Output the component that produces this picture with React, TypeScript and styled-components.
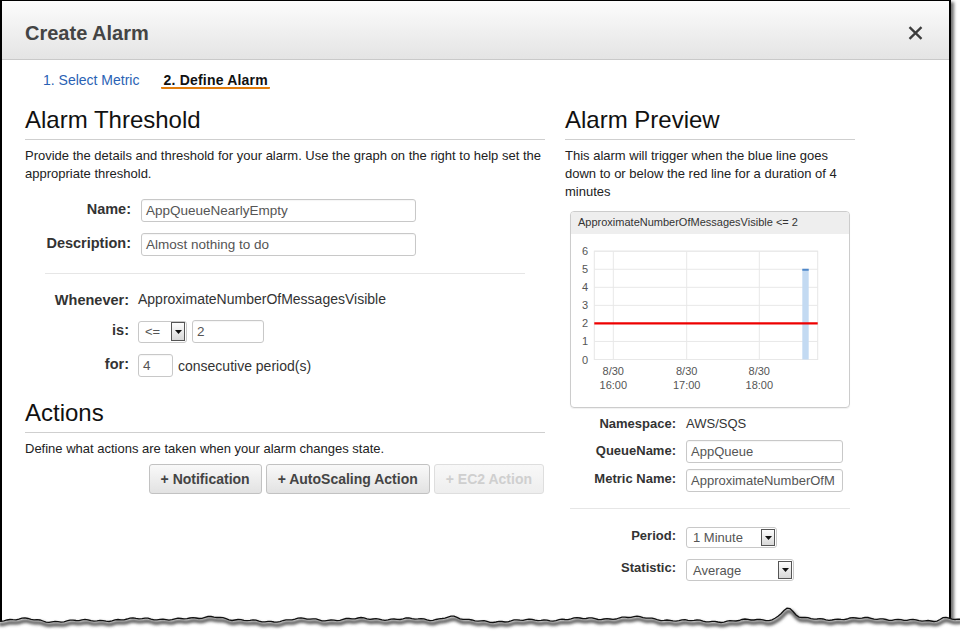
import React from "react";
import styled, { createGlobalStyle } from "styled-components";

const GlobalStyle = createGlobalStyle`
  html, body {
    margin: 0;
    padding: 0;
    background: #fff;
  }
  body {
    font-family: "Liberation Sans", Arial, sans-serif;
    color: #222;
    overflow: hidden;
  }
`;

const Page = styled.div`
  position: relative;
  width: 960px;
  height: 636px;
  overflow: hidden;
`;

const Frame = styled.div`
  width: 951px;
  height: 640px;
  box-sizing: border-box;
  border: 1px solid #000;
  border-left-width: 2px;
  border-right-width: 2px;
  border-bottom: none;
  box-shadow: 3px 2px 3px rgba(0, 0, 0, 0.55);
  background: #fff;
`;

const Header = styled.div`
  height: 59px;
  display: flex;
  align-items: center;
  justify-content: space-between;
  padding: 6px 26px 0 23px;
  box-sizing: border-box;
  background: linear-gradient(#fcfcfc, #e4e4e4);
  border-bottom: 1px solid #c9c9c9;
`;

const Title = styled.h1`
  margin: 0;
  font-size: 20px;
  line-height: 24px;
  font-weight: bold;
  color: #444;
`;

const Close = styled.svg`
  width: 15px;
  height: 14px;
  margin-top: -1px;
`;

const Tabs = styled.div`
  display: flex;
  padding: 13px 0 0 39px;
`;

const Tab = styled.div<{ $active?: boolean }>`
  font-size: 14px;
  line-height: 14px;
  padding: 0 2px;
  margin-left: ${(p) => (p.$active ? "20px" : "0")};
  color: ${(p) => (p.$active ? "#111" : "#2a62b4")};
  font-weight: ${(p) => (p.$active ? "bold" : "normal")};
  letter-spacing: ${(p) => (p.$active ? "0.2px" : "0")};
  border-bottom: 2px solid ${(p) => (p.$active ? "#e27d0c" : "transparent")};
  border-radius: 1px;
`;

const Body = styled.div`
  display: flex;
  gap: 20px;
  padding: 18px 0 0 23px;
`;

const LeftCol = styled.div`
  width: 520px;
  display: flex;
  flex-direction: column;
`;

const RightCol = styled.div`
  width: 290px;
  display: flex;
  flex-direction: column;
`;

const SectionTitle = styled.h2<{ $top?: number }>`
  margin: ${(p) => p.$top ?? 0}px 0 0;
  font-size: 24px;
  line-height: 26px;
  font-weight: normal;
  color: #111;
  padding-bottom: 6px;
  border-bottom: 1px solid #cfcfcf;
`;

const Intro = styled.p`
  margin: 7px 0 0;
  font-size: 13px;
  line-height: 18px;
  color: #222;
`;

const Fields = styled.div<{ $top: number; $gap: number }>`
  display: flex;
  flex-direction: column;
  gap: ${(p) => p.$gap}px;
  margin-top: ${(p) => p.$top}px;
`;

const Row = styled.div<{ $label: number; $gap: number }>`
  display: grid;
  grid-template-columns: ${(p) => p.$label}px auto;
  column-gap: ${(p) => p.$gap}px;
  align-items: start;
  justify-content: start;
`;

const Label = styled.div<{ $size?: number; $pad?: number }>`
  text-align: right;
  font-weight: bold;
  font-size: ${(p) => p.$size ?? 14.5}px;
  line-height: 18px;
  padding-top: ${(p) => p.$pad ?? 1}px;
  color: #333;
  white-space: nowrap;
`;

const Value = styled.div<{ $size?: number }>`
  font-size: ${(p) => p.$size ?? 14}px;
  line-height: 20px;
  color: #333;
`;

const Inline = styled.div`
  display: flex;
  align-items: center;
  gap: 5px;
`;

const TextInput = styled.div<{ $w: number; $h?: number; $size?: number }>`
  width: ${(p) => p.$w}px;
  height: ${(p) => p.$h ?? 23}px;
  box-sizing: border-box;
  border: 1px solid #c8c8c8;
  border-radius: 3px;
  padding: 0 4px;
  font-size: ${(p) => p.$size ?? 13.5}px;
  line-height: ${(p) => (p.$h ?? 23) - 2}px;
  color: #555;
  white-space: nowrap;
  overflow: hidden;
  box-shadow: inset 0 1px 1px rgba(0, 0, 0, 0.04);
`;

const Select = styled.div<{ $w: number; $h: number; $size?: number }>`
  width: ${(p) => p.$w}px;
  height: ${(p) => p.$h}px;
  box-sizing: border-box;
  border: 1px solid #c8c8c8;
  border-radius: 3px;
  display: flex;
  align-items: center;
  justify-content: space-between;
  padding: 0 1px 0 6px;
  font-size: ${(p) => p.$size ?? 13}px;
  color: #555;
`;

const SelectArrow = styled.span<{ $h: number }>`
  width: 14px;
  height: ${(p) => p.$h}px;
  box-sizing: border-box;
  border: 1px solid #555;
  background: linear-gradient(#fdfdfd, #d8d8d8);
  display: flex;
  align-items: center;
  justify-content: center;
`;

const Divider = styled.div<{ $top: number; $inset: number }>`
  height: 1px;
  background: #e6e6e6;
  margin: ${(p) => p.$top}px ${(p) => p.$inset}px 0;
`;

const Buttons = styled.div`
  display: flex;
  justify-content: flex-end;
  gap: 4px;
  margin-top: 6px;
  padding-right: 1px;
`;

const Button = styled.div<{ $disabled?: boolean }>`
  height: 30px;
  box-sizing: border-box;
  padding: 0 11px;
  display: flex;
  align-items: center;
  border: 1px solid ${(p) => (p.$disabled ? "#dedede" : "#c2c2c2")};
  border-radius: 3px;
  background: ${(p) =>
    p.$disabled
      ? "linear-gradient(#f8f8f8, #eeeeee)"
      : "linear-gradient(#f9f9f9, #e2e2e2)"};
  font-size: 14px;
  font-weight: bold;
  color: ${(p) => (p.$disabled ? "#cfcfcf" : "#444")};
`;

const ChartCard = styled.div`
  margin: 10px 0 0 5px;
  width: 280px;
  height: 197px;
  box-sizing: border-box;
  border: 1px solid #cccccc;
  border-radius: 4px;
  overflow: hidden;
  box-shadow: 0 1px 1px rgba(0, 0, 0, 0.06);
`;

const ChartHead = styled.div`
  height: 22px;
  background: #eeeeee;
  font-size: 11px;
  line-height: 21px;
  padding-left: 7px;
  color: #333;
`;

const TornEdge = styled.svg`
  position: absolute;
  left: 0;
  top: 596px;
`;

function Arrow({ h }: { h: number }) {
  return (
    <SelectArrow $h={h}>
      <svg width="7" height="4" viewBox="0 0 7 4">
        <path d="M0 0h7L3.5 4z" fill="#111" />
      </svg>
    </SelectArrow>
  );
}

function Chart() {
  const left = 23.3;
  const right = 246.7;
  const top = 17.2;
  const step = 18.05;
  const bottom = top + step * 6;
  const ys = [6, 5, 4, 3, 2, 1, 0];
  const xs = [
    { x: 42.3, t: "16:00" },
    { x: 115.7, t: "17:00" },
    { x: 188.3, t: "18:00" },
  ];
  return (
    <svg width="278" height="173" viewBox="0 0 278 173">
      <rect x={left} y={top} width={right - left} height={bottom - top} fill="#fff" stroke="#e6e6e6" />
      {ys.map((v, i) => (
        <g key={v}>
          <line x1={left} x2={right} y1={top + i * step} y2={top + i * step} stroke="#e8e8e8" />
          <text x="14" y={top + i * step + 4} fontSize="11" fill="#555" textAnchor="middle" fontFamily="Liberation Sans, Arial, sans-serif">
            {v}
          </text>
        </g>
      ))}
      {xs.map((c) => (
        <g key={c.t}>
          <line x1={c.x} x2={c.x} y1={top} y2={bottom} stroke="#e8e8e8" />
          <text x={c.x} y="141.2" fontSize="11" fill="#555" textAnchor="middle" fontFamily="Liberation Sans, Arial, sans-serif">
            8/30
          </text>
          <text x={c.x} y="154.5" fontSize="11" fill="#555" textAnchor="middle" fontFamily="Liberation Sans, Arial, sans-serif">
            {c.t}
          </text>
        </g>
      ))}
      <rect x="231.3" y={top + step} width="6.4" height={bottom - top - step} fill="#c3daf2" />
      <rect x="231.3" y={top + step - 0.5} width="6.4" height="2" fill="#4f88c9" />
      <line x1={left} x2={right} y1={top + step * 4} y2={top + step * 4} stroke="#ee0000" strokeWidth="2.4" />
    </svg>
  );
}

function tornLine() {
  const bumps = [
    { c: 28, a: -1.5, w: 10 },
    { c: 215, a: -4, w: 9 },
    { c: 300, a: -1.5, w: 14 },
    { c: 450, a: -4.5, w: 8 },
    { c: 640, a: -2, w: 20 },
    { c: 787, a: -11, w: 6 },
    { c: 880, a: -2, w: 18 },
    { c: 946, a: -4, w: 6 },
  ];
  const pts: string[] = [];
  for (let x = -2; x <= 962; x += 3) {
    let y = 24 + 1.2 * Math.sin(x * 0.029) + 0.9 * Math.sin(x * 0.113 + 2) + 0.6 * Math.sin(x * 0.41 + 1);
    for (const b of bumps) y += b.a * Math.exp(-((x - b.c) ** 2) / (2 * b.w * b.w));
    pts.push(`${x},${y.toFixed(1)}`);
  }
  return pts;
}

export default function App() {
  const pts = tornLine();
  const line = "M" + pts.join(" L");
  const fill = line + " L962,40 L-2,40 Z";

  return (
    <>
      <GlobalStyle />
      <Page>
        <Frame>
          <Header>
            <Title>Create Alarm</Title>
            <Close viewBox="0 0 15 14">
              <path d="M1.5 1.2L13.5 12.8M13.5 1.2L1.5 12.8" stroke="#3d3d3d" strokeWidth="2.3" />
            </Close>
          </Header>
          <Tabs>
            <Tab>1. Select Metric</Tab>
            <Tab $active>2. Define Alarm</Tab>
          </Tabs>
          <Body>
            <LeftCol>
              <SectionTitle>Alarm Threshold</SectionTitle>
              <Intro>
                Provide the details and threshold for your alarm. Use the graph on the right to help set the
                appropriate threshold.
              </Intro>
              <Fields $top={16} $gap={11}>
                <Row $label={106} $gap={10}>
                  <Label>Name:</Label>
                  <TextInput $w={275}>AppQueueNearlyEmpty</TextInput>
                </Row>
                <Row $label={106} $gap={10}>
                  <Label>Description:</Label>
                  <TextInput $w={275}>Almost nothing to do</TextInput>
                </Row>
              </Fields>
              <Divider $top={17} $inset={20} />
              <Fields $top={15} $gap={11}>
                <Row $label={104} $gap={9}>
                  <Label $pad={2}>Whenever:</Label>
                  <Value>ApproximateNumberOfMessagesVisible</Value>
                </Row>
                <Row $label={104} $gap={9}>
                  <Label>is:</Label>
                  <Inline>
                    <Select $w={49} $h={22}>
                      &lt;=
                      <Arrow h={19} />
                    </Select>
                    <TextInput $w={72} $h={23}>2</TextInput>
                  </Inline>
                </Row>
                <Row $label={104} $gap={9}>
                  <Label>for:</Label>
                  <Inline>
                    <TextInput $w={35}>4</TextInput>
                    <Value>consecutive period(s)</Value>
                  </Inline>
                </Row>
              </Fields>
              <SectionTitle $top={23}>Actions</SectionTitle>
              <Intro>Define what actions are taken when your alarm changes state.</Intro>
              <Buttons>
                <Button>+ Notification</Button>
                <Button>+ AutoScaling Action</Button>
                <Button $disabled>+ EC2 Action</Button>
              </Buttons>
            </LeftCol>
            <RightCol>
              <SectionTitle>Alarm Preview</SectionTitle>
              <Intro>
                This alarm will trigger when the blue line goes down to or below the red line for a duration of 4
                minutes
              </Intro>
              <ChartCard>
                <ChartHead>ApproximateNumberOfMessagesVisible &lt;= 2</ChartHead>
                <Chart />
              </ChartCard>
              <Fields $top={6} $gap={6}>
                <Row $label={111} $gap={10}>
                  <Label $size={13} $pad={1}>Namespace:</Label>
                  <Value $size={13}>AWS/SQS</Value>
                </Row>
                <Row $label={111} $gap={10}>
                  <Label $size={13} $pad={2}>QueueName:</Label>
                  <TextInput $w={157} $size={13}>AppQueue</TextInput>
                </Row>
                <Row $label={111} $gap={10}>
                  <Label $size={13} $pad={1}>Metric Name:</Label>
                  <TextInput $w={157} $size={13}>ApproximateNumberOfM</TextInput>
                </Row>
              </Fields>
              <Divider $top={16} $inset={5} />
              <Fields $top={18} $gap={11}>
                <Row $label={111} $gap={10}>
                  <Label $size={13} $pad={0}>Period:</Label>
                  <Select $w={91} $h={21}>
                    1 Minute
                    <Arrow h={17} />
                  </Select>
                </Row>
                <Row $label={111} $gap={10}>
                  <Label $size={13} $pad={0}>Statistic:</Label>
                  <Select $w={108} $h={22}>
                    Average
                    <Arrow h={18} />
                  </Select>
                </Row>
              </Fields>
            </RightCol>
          </Body>
        </Frame>
        <TornEdge width="960" height="40" viewBox="0 0 960 40">
          <defs>
            <filter id="blur" x="-5%" y="-50%" width="110%" height="200%">
              <feGaussianBlur stdDeviation="1.6" />
            </filter>
          </defs>
          <path d={fill} fill="#fff" />
          <path d={line} transform="translate(1,3)" fill="none" stroke="#555" strokeWidth="3.5" filter="url(#blur)" />
          <path d={line} fill="none" stroke="#111" strokeWidth="1.3" />
        </TornEdge>
      </Page>
    </>
  );
}
